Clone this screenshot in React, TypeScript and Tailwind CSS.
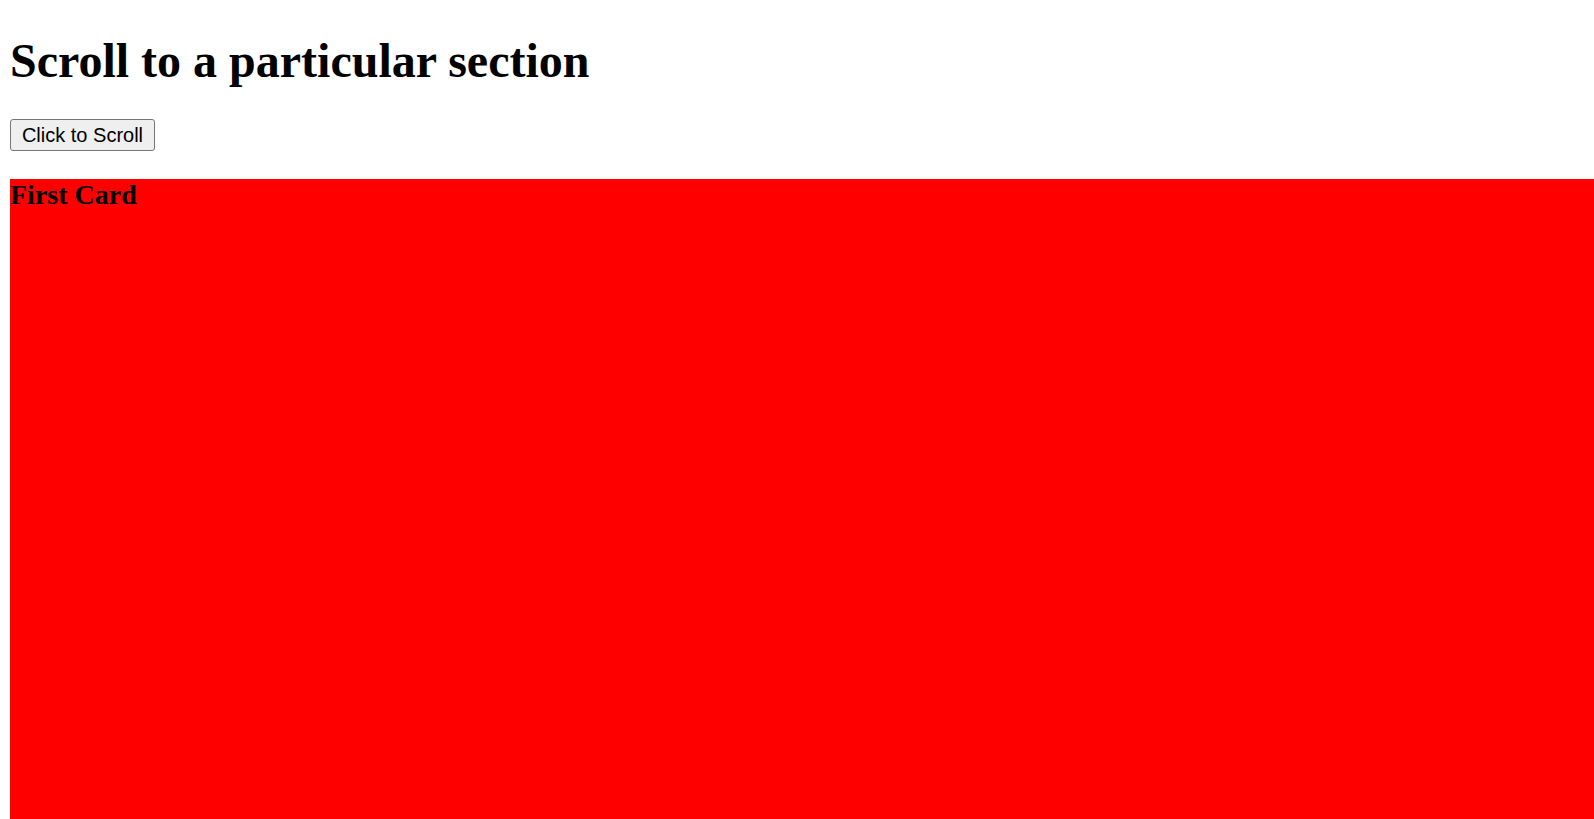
import { useRef } from "react";

export default function App() {
  const cardRef = useRef<HTMLDivElement>(null);

  const handleScroll = () => {
    cardRef.current?.scrollIntoView({ behavior: "smooth" });
  };

  return (
    <div className="h-screen overflow-hidden bg-white pl-[10px] pt-[33px] font-['Liberation_Serif',serif] text-black">
      <h1 className="m-0 text-[48px] font-bold leading-[55px]">Scroll to a particular section</h1>
      <button
        type="button"
        onClick={handleScroll}
        className="mt-[31px] h-[32px] w-[145px] rounded-[3px] border border-[#767676] bg-[#efefef] font-['Liberation_Sans',Arial,sans-serif] text-[20px] leading-none text-black hover:bg-[#e5e5e5]"
      >
        Click to Scroll
      </button>
      <div ref={cardRef} className="mt-[28px] h-screen bg-[#ff0000]">
        <h2 className="m-0 text-[28px] font-bold leading-[32px]">First Card</h2>
      </div>
    </div>
  );
}
